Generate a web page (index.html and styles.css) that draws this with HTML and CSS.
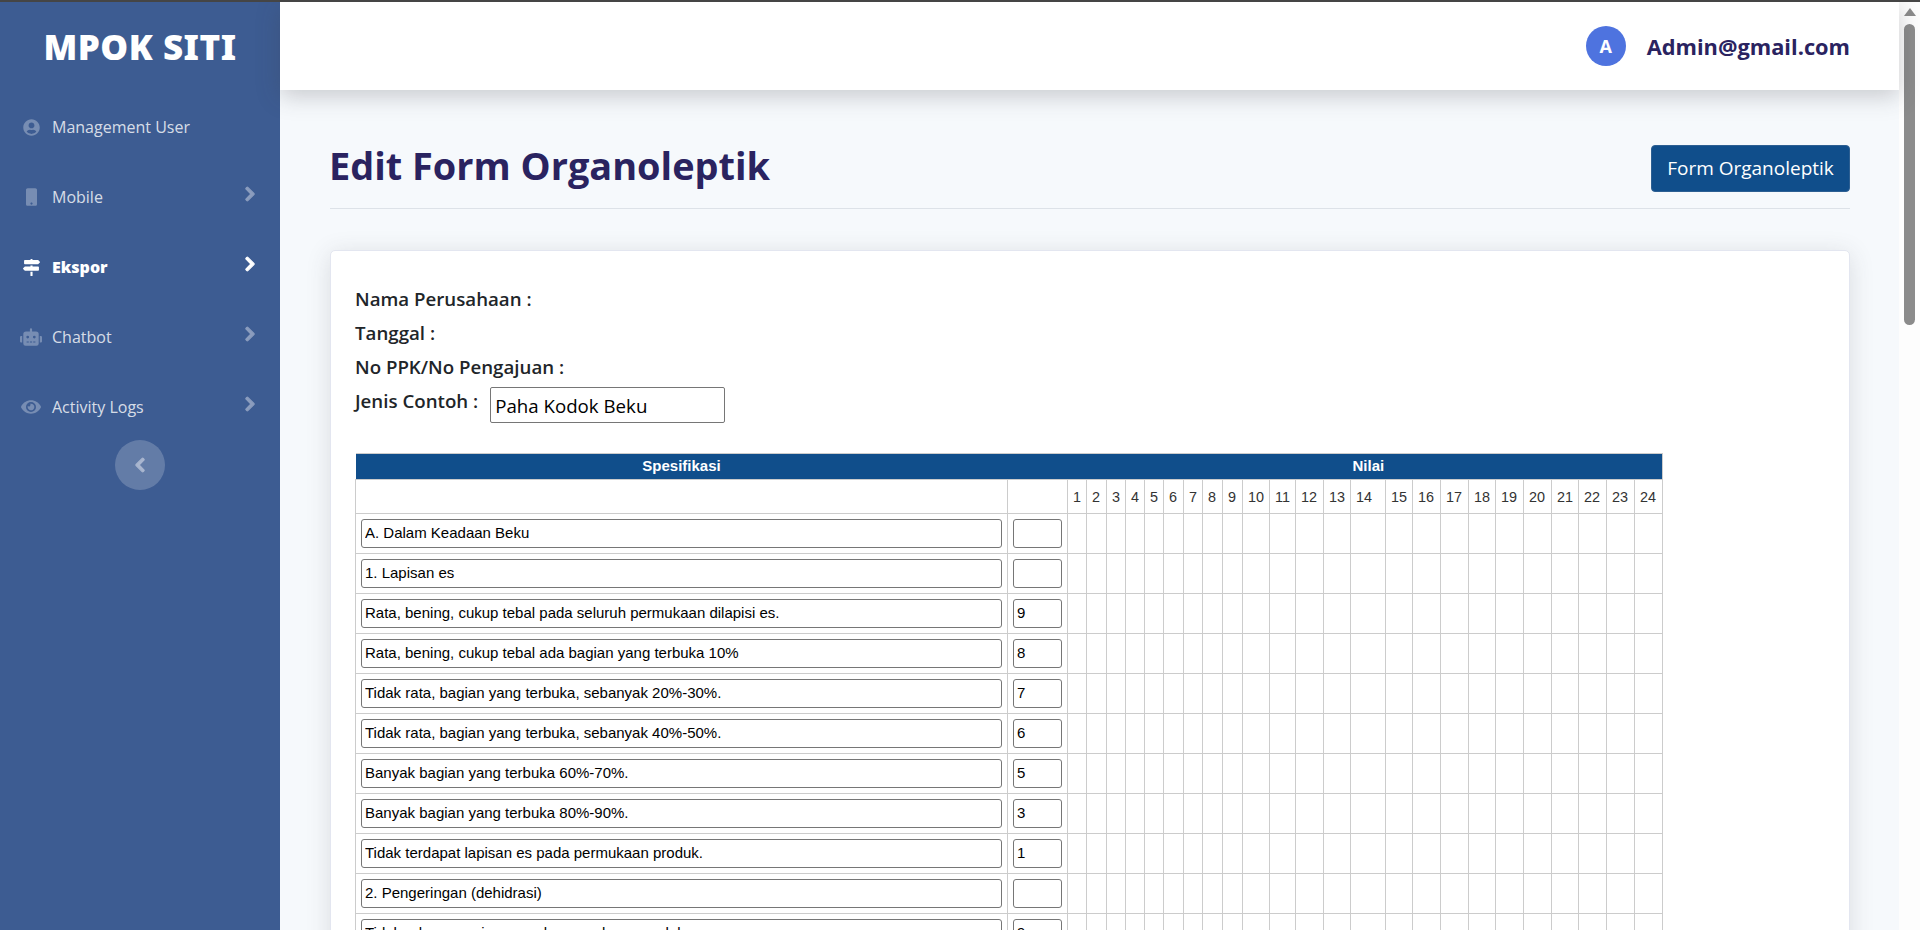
FILE: index.html
```html
<!DOCTYPE html>
<html lang="en">

<head>
    <meta charset="UTF-8">
    <meta name="viewport" content="width=device-width, initial-scale=1.0">
    <title>Edit Form Organoleptik</title>
    <link rel="stylesheet" href="styles.css">
</head>

<body>
    <aside class="sidebar">
        <div class="brand">MPOK SITI</div>
        <nav class="side-menu">
            <a class="side-item" href="#">
                <span class="side-icon"><svg class="ic-user" viewBox="0 0 496 512"><path d="M248 8C111 8 0 119 0 256s111 248 248 248 248-111 248-248S385 8 248 8zm0 96c48.6 0 88 39.4 88 88s-39.4 88-88 88-88-39.4-88-88 39.4-88 88-88zm0 344c-58.7 0-111.3-26.6-146.5-68.2 18.8-35.4 55.6-59.8 98.5-59.8 2.4 0 4.8.4 7.1 1.1 13 4.2 26.6 6.9 40.9 6.9 14.3 0 28-2.7 40.9-6.9 2.3-.7 4.7-1.1 7.1-1.1 42.9 0 79.7 24.4 98.5 59.8C359.3 421.4 306.7 448 248 448z"/></svg></span>
                <span>Management User</span>
            </a>
            <a class="side-item" href="#">
                <span class="side-icon"><svg class="ic-mobile" viewBox="0 0 320 512"><path d="M272 0H48C21.5 0 0 21.5 0 48v416c0 26.5 21.5 48 48 48h224c26.5 0 48-21.5 48-48V48c0-26.5-21.5-48-48-48zM160 480c-17.7 0-32-14.3-32-32s14.3-32 32-32 32 14.3 32 32-14.3 32-32 32z"/></svg></span>
                <span>Mobile</span>
                <svg class="chevron" viewBox="0 0 320 512"><path d="M285.476 272.971L91.132 467.314c-9.373 9.373-24.569 9.373-33.941 0l-22.667-22.667c-9.357-9.357-9.375-24.522-.04-33.901L188.505 256 34.484 101.255c-9.335-9.379-9.317-24.544.04-33.901l22.667-22.667c9.373-9.373 24.569-9.373 33.941 0L285.475 239.03c9.373 9.372 9.373 24.568.001 33.941z"/></svg>
            </a>
            <a class="side-item active" href="#">
                <span class="side-icon"><svg class="ic-signs" viewBox="0 0 512 512"><path d="M507.31 84.69L464 41.37c-6-6-14.14-9.37-22.63-9.37H288V16c0-8.84-7.16-16-16-16h-32c-8.84 0-16 7.16-16 16v16H56c-13.25 0-24 10.75-24 24v80c0 13.25 10.75 24 24 24h385.37c8.49 0 16.62-3.37 22.63-9.37l43.31-43.31c6.25-6.26 6.25-16.38 0-22.63zM224 496c0 8.84 7.16 16 16 16h32c8.84 0 16-7.16 16-16V384h-64v112zm232-272H288v-32h-64v32H70.63c-8.49 0-16.62 3.37-22.63 9.37L4.69 276.69c-6.25 6.25-6.25 16.38 0 22.63L48 342.63c6 6 14.14 9.37 22.63 9.37H456c13.25 0 24-10.75 24-24v-80c0-13.25-10.75-24-24-24z"/></svg></span>
                <span>Ekspor</span>
                <svg class="chevron" viewBox="0 0 320 512"><path d="M285.476 272.971L91.132 467.314c-9.373 9.373-24.569 9.373-33.941 0l-22.667-22.667c-9.357-9.357-9.375-24.522-.04-33.901L188.505 256 34.484 101.255c-9.335-9.379-9.317-24.544.04-33.901l22.667-22.667c9.373-9.373 24.569-9.373 33.941 0L285.475 239.03c9.373 9.372 9.373 24.568.001 33.941z"/></svg>
            </a>
            <a class="side-item" href="#">
                <span class="side-icon"><svg class="ic-robot" viewBox="0 0 640 512"><path d="M32,224H64V416H32A31.96166,31.96166,0,0,1,0,384V256A31.96166,31.96166,0,0,1,32,224Zm512-48V448a64.06328,64.06328,0,0,1-64,64H160a64.06328,64.06328,0,0,1-64-64V176a79.974,79.974,0,0,1,80-80H288V32a32,32,0,0,1,64,0V96H464A79.974,79.974,0,0,1,544,176ZM264,256a40,40,0,1,0-40,40A39.997,39.997,0,0,0,264,256Zm-8,128H192v32h64Zm96,0H288v32h64ZM456,256a40,40,0,1,0-40,40A39.997,39.997,0,0,0,456,256Zm-8,128H384v32h64ZM640,256V384a31.96166,31.96166,0,0,1-32,32H576V224h32A31.96166,31.96166,0,0,1,640,256Z"/></svg></span>
                <span>Chatbot</span>
                <svg class="chevron" viewBox="0 0 320 512"><path d="M285.476 272.971L91.132 467.314c-9.373 9.373-24.569 9.373-33.941 0l-22.667-22.667c-9.357-9.357-9.375-24.522-.04-33.901L188.505 256 34.484 101.255c-9.335-9.379-9.317-24.544.04-33.901l22.667-22.667c9.373-9.373 24.569-9.373 33.941 0L285.475 239.03c9.373 9.372 9.373 24.568.001 33.941z"/></svg>
            </a>
            <a class="side-item" href="#">
                <span class="side-icon"><svg class="ic-eye" viewBox="0 0 576 512"><path d="M572.52 241.4C518.29 135.59 410.93 64 288 64S57.68 135.64 3.48 241.41a32.35 32.35 0 0 0 0 29.19C57.71 376.41 165.07 448 288 448s230.32-71.64 284.52-177.41a32.35 32.35 0 0 0 0-29.19zM288 400a144 144 0 1 1 144-144 143.93 143.93 0 0 1-144 144zm0-240a95.31 95.31 0 0 0-25.31 3.79 47.85 47.85 0 0 1-66.9 66.9A95.78 95.78 0 1 0 288 160z"/></svg></span>
                <span>Activity Logs</span>
                <svg class="chevron" viewBox="0 0 320 512"><path d="M285.476 272.971L91.132 467.314c-9.373 9.373-24.569 9.373-33.941 0l-22.667-22.667c-9.357-9.357-9.375-24.522-.04-33.901L188.505 256 34.484 101.255c-9.335-9.379-9.317-24.544.04-33.901l22.667-22.667c9.373-9.373 24.569-9.373 33.941 0L285.475 239.03c9.373 9.372 9.373 24.568.001 33.941z"/></svg>
            </a>
        </nav>
        <button class="side-toggle" type="button">
            <svg viewBox="0 0 320 512"><path d="M34.52 239.03L228.87 44.69c9.37-9.37 24.57-9.37 33.94 0l22.67 22.67c9.36 9.36 9.37 24.52.04 33.9L131.49 256l154.02 154.75c9.34 9.38 9.32 24.54-.04 33.9l-22.67 22.67c-9.37 9.37-24.57 9.37-33.94 0L34.52 272.97c-9.37-9.37-9.37-24.57 0-33.94z"/></svg>
        </button>
    </aside>

    <div class="main">
        <header class="topbar">
            <span class="avatar">A</span>
            <span class="user-name">Admin@gmail.com</span>
        </header>

        <div class="content">
            <div class="page-head">
                <h1>Edit Form Organoleptik</h1>
                <a class="btn-form" href="#">Form Organoleptik</a>
            </div>

            <div class="card">
                <p class="field">Nama Perusahaan :</p>
                <p class="field">Tanggal :</p>
                <p class="field">No PPK/No Pengajuan :</p>
                <div class="field-row">
                    <label for="jenis">Jenis Contoh :</label>
                    <input class="jenis-input" type="text" id="jenis" value="Paha Kodok Beku">
                </div>

                <table class="form-table">
                    <colgroup>
                        <col class="w652"><col class="w60">
                        <col class="w19"><col class="w20"><col class="w19"><col class="w19"><col class="w19"><col class="w20"><col class="w19"><col class="w20"><col class="w20">
                        <col class="w27"><col class="w26"><col class="w28"><col class="w27"><col class="w35"><col class="w27"><col class="w28"><col class="w28"><col class="w27"><col class="w28"><col class="w28"><col class="w27"><col class="w28"><col class="w28"><col class="w28">
                    </colgroup>
                    <thead>
                        <tr class="head-main">
                            <th>Spesifikasi</th>
                            <th></th>
                            <th colspan="24" class="head-nilai">Nilai</th>
                        </tr>
                        <tr class="head-nums">
                            <th></th><th></th>
                            <th>1</th><th>2</th><th>3</th><th>4</th><th>5</th><th>6</th><th>7</th><th>8</th><th>9</th><th>10</th><th>11</th><th>12</th><th>13</th><th>14</th><th>15</th><th>16</th><th>17</th><th>18</th><th>19</th><th>20</th><th>21</th><th>22</th><th>23</th><th>24</th>
                        </tr>
                    </thead>
                    <tbody>
                        <tr>
                            <td><input type="text" value="A. Dalam Keadaan Beku"></td>
                            <td><input type="text" value=""></td>
                            <td></td><td></td><td></td><td></td><td></td><td></td><td></td><td></td><td></td><td></td><td></td><td></td><td></td><td></td><td></td><td></td><td></td><td></td><td></td><td></td><td></td><td></td><td></td><td></td>
                        </tr>
                        <tr>
                            <td><input type="text" value="1. Lapisan es"></td>
                            <td><input type="text" value=""></td>
                            <td></td><td></td><td></td><td></td><td></td><td></td><td></td><td></td><td></td><td></td><td></td><td></td><td></td><td></td><td></td><td></td><td></td><td></td><td></td><td></td><td></td><td></td><td></td><td></td>
                        </tr>
                        <tr>
                            <td><input type="text" value="Rata, bening, cukup tebal pada seluruh permukaan dilapisi es."></td>
                            <td><input type="text" value="9"></td>
                            <td></td><td></td><td></td><td></td><td></td><td></td><td></td><td></td><td></td><td></td><td></td><td></td><td></td><td></td><td></td><td></td><td></td><td></td><td></td><td></td><td></td><td></td><td></td><td></td>
                        </tr>
                        <tr>
                            <td><input type="text" value="Rata, bening, cukup tebal ada bagian yang terbuka 10%"></td>
                            <td><input type="text" value="8"></td>
                            <td></td><td></td><td></td><td></td><td></td><td></td><td></td><td></td><td></td><td></td><td></td><td></td><td></td><td></td><td></td><td></td><td></td><td></td><td></td><td></td><td></td><td></td><td></td><td></td>
                        </tr>
                        <tr>
                            <td><input type="text" value="Tidak rata, bagian yang terbuka, sebanyak 20%-30%."></td>
                            <td><input type="text" value="7"></td>
                            <td></td><td></td><td></td><td></td><td></td><td></td><td></td><td></td><td></td><td></td><td></td><td></td><td></td><td></td><td></td><td></td><td></td><td></td><td></td><td></td><td></td><td></td><td></td><td></td>
                        </tr>
                        <tr>
                            <td><input type="text" value="Tidak rata, bagian yang terbuka, sebanyak 40%-50%."></td>
                            <td><input type="text" value="6"></td>
                            <td></td><td></td><td></td><td></td><td></td><td></td><td></td><td></td><td></td><td></td><td></td><td></td><td></td><td></td><td></td><td></td><td></td><td></td><td></td><td></td><td></td><td></td><td></td><td></td>
                        </tr>
                        <tr>
                            <td><input type="text" value="Banyak bagian yang terbuka 60%-70%."></td>
                            <td><input type="text" value="5"></td>
                            <td></td><td></td><td></td><td></td><td></td><td></td><td></td><td></td><td></td><td></td><td></td><td></td><td></td><td></td><td></td><td></td><td></td><td></td><td></td><td></td><td></td><td></td><td></td><td></td>
                        </tr>
                        <tr>
                            <td><input type="text" value="Banyak bagian yang terbuka 80%-90%."></td>
                            <td><input type="text" value="3"></td>
                            <td></td><td></td><td></td><td></td><td></td><td></td><td></td><td></td><td></td><td></td><td></td><td></td><td></td><td></td><td></td><td></td><td></td><td></td><td></td><td></td><td></td><td></td><td></td><td></td>
                        </tr>
                        <tr>
                            <td><input type="text" value="Tidak terdapat lapisan es pada permukaan produk."></td>
                            <td><input type="text" value="1"></td>
                            <td></td><td></td><td></td><td></td><td></td><td></td><td></td><td></td><td></td><td></td><td></td><td></td><td></td><td></td><td></td><td></td><td></td><td></td><td></td><td></td><td></td><td></td><td></td><td></td>
                        </tr>
                        <tr>
                            <td><input type="text" value="2. Pengeringan (dehidrasi)"></td>
                            <td><input type="text" value=""></td>
                            <td></td><td></td><td></td><td></td><td></td><td></td><td></td><td></td><td></td><td></td><td></td><td></td><td></td><td></td><td></td><td></td><td></td><td></td><td></td><td></td><td></td><td></td><td></td><td></td>
                        </tr>
                        <tr>
                            <td><input type="text" value="Tidak ada pengeringan pada permukaan produk."></td>
                            <td><input type="text" value="9"></td>
                            <td></td><td></td><td></td><td></td><td></td><td></td><td></td><td></td><td></td><td></td><td></td><td></td><td></td><td></td><td></td><td></td><td></td><td></td><td></td><td></td><td></td><td></td><td></td><td></td>
                        </tr>
                    </tbody>
                </table>
            </div>
        </div>
    </div>

    <div class="scroll-track">
        <span class="scroll-arrow"></span>
        <span class="scroll-thumb"></span>
    </div>
</body>

</html>
```
FILE: styles.css
```css
html,
body {
    height: 100%;
    overflow: hidden;
}

body {
    margin: 0;
    display: flex;
    box-sizing: border-box;
    border-top: 2px solid #454545;
    background-color: #f6f9fc;
    font-family: "Open Sans", "Noto Sans", sans-serif;
    color: #212529;
}

/* sidebar */
.sidebar {
    flex: 0 0 280px;
    background-color: #3d5c92;
    display: flex;
    flex-direction: column;
}

.brand {
    height: 92px;
    box-sizing: border-box;
    padding-top: 20px;
    text-align: center;
    font-family: "Noto Sans", "Open Sans", sans-serif;
    font-size: 35px;
    line-height: 50px;
    font-weight: 900;
    letter-spacing: 0.5px;
    color: #fff;
}

.side-menu {
    display: flex;
    flex-direction: column;
    gap: 4px;
}

.side-item {
    height: 66px;
    display: flex;
    align-items: center;
    padding: 0 25px 0 15px;
    font-size: 16px;
    color: rgba(255, 255, 255, 0.8);
    text-decoration: none;
}

.side-item.active {
    color: #fff;
    font-weight: 800;
}

.side-icon {
    flex: 0 0 32px;
    margin-right: 5px;
    display: flex;
    justify-content: center;
    fill: rgba(255, 255, 255, 0.3);
}

.side-item.active .side-icon {
    fill: #fff;
}

.ic-user {
    width: 17px;
    height: 17px;
}

.ic-mobile {
    width: 11px;
    height: 18px;
}

.ic-signs {
    width: 17px;
    height: 17px;
}

.ic-robot {
    width: 22px;
    height: 18px;
}

.ic-eye {
    width: 20px;
    height: 18px;
}

.chevron {
    width: 10px;
    height: 16px;
    margin-left: auto;
    margin-bottom: 6px;
    fill: #8b9dbe;
    stroke: #8b9dbe;
    stroke-width: 36;
}

.side-item.active .chevron {
    fill: #fff;
    stroke: #fff;
}

.side-toggle {
    width: 50px;
    height: 50px;
    margin: 0 auto;
    padding: 0;
    border: none;
    border-radius: 50%;
    background-color: rgba(255, 255, 255, 0.2);
    display: flex;
    align-items: center;
    justify-content: center;
}

.side-toggle svg {
    width: 10px;
    height: 16px;
    fill: #a9b6cf;
    stroke: #a9b6cf;
    stroke-width: 36;
}

/* main area */
.main {
    flex: 1;
    min-width: 0;
    display: flex;
    flex-direction: column;
}

.topbar {
    flex: 0 0 88px;
    background-color: #fff;
    box-shadow: 0 6px 22px rgba(58, 59, 69, 0.25);
    display: flex;
    align-items: center;
    justify-content: flex-end;
    gap: 21px;
    padding-right: 49px;
    position: relative;
}

.avatar {
    width: 40px;
    height: 40px;
    border-radius: 50%;
    background-color: #4e73df;
    color: #fff;
    font-weight: 700;
    font-size: 18px;
    display: flex;
    align-items: center;
    justify-content: center;
}

.user-name {
    font-size: 21.8px;
    font-weight: 700;
    color: #2a2360;
}

.content {
    padding: 55px 49px 0 50px;
}

.page-head {
    display: flex;
    align-items: center;
    justify-content: space-between;
    height: 64px;
    box-sizing: border-box;
    padding-bottom: 16px;
    border-bottom: 1px solid #dde2e8;
}

h1 {
    margin: 0 0 6px -1px;
    font-size: 37.9px;
    line-height: 47px;
    font-weight: 700;
    color: #2a2360;
}

.btn-form {
    width: 199px;
    height: 47px;
    box-sizing: border-box;
    background-color: #104e8b;
    border: 1px solid #2d5f92;
    border-radius: 4px;
    color: #fff;
    font-size: 19px;
    line-height: 45px;
    text-align: center;
    text-decoration: none;
}

.card {
    margin-top: 41px;
    padding: 31px 24px 40px;
    background-color: #fff;
    border: 1px solid #e3e6f0;
    border-radius: 5px;
    box-shadow: 0 4px 24px rgba(58, 59, 69, 0.15);
}

.field {
    margin: 0;
    font-size: 18.7px;
    line-height: 34px;
    font-weight: 600;
}

.field-row {
    display: flex;
    align-items: flex-start;
    gap: 12px;
    margin: 3px 0 30px;
    height: 36px;
}

.field-row label {
    font-size: 18.7px;
    line-height: 28px;
    font-weight: 600;
}

.jenis-input {
    width: 235px;
    height: 36px;
    box-sizing: border-box;
    padding: 0 4px;
    font-family: "Open Sans", "Noto Sans", sans-serif;
    font-size: 18.7px;
    border: 1px solid #767676;
    border-radius: 2px;
    color: #000;
}

/* form table */
.form-table {
    table-layout: fixed;
    width: 1307px;
    border-collapse: collapse;
    font-family: "Liberation Sans", Arial, sans-serif;
    font-size: 14.4px;
}

.form-table th,
.form-table td {
    border: 1px solid #ccc;
    padding: 5px;
}

.form-table th {
    overflow: hidden;
    font-weight: 400;
    color: #333;
    text-align: left;
}

.head-main th {
    height: 23px;
    padding: 0 0 2px;
    border-left: none;
    border-right: none;
    background-color: #104e8b;
    color: #fff;
    font-size: 15px;
    font-weight: 700;
    text-align: center;
}

.head-main .head-nilai {
    padding-left: 7px;
    border-right: 1px solid #ccc;
}

.head-nums th {
    height: 23px;
}

.form-table td input {
    display: block;
    width: 100%;
    height: 29px;
    box-sizing: border-box;
    padding: 0 3px 2px;
    border: 1px solid #767676;
    border-radius: 3px;
    font-family: "Liberation Sans", Arial, sans-serif;
    font-size: 15px;
    color: #000;
}

.w652 { width: 652px; }
.w60 { width: 60px; }
.w19 { width: 19px; }
.w20 { width: 20px; }
.w26 { width: 26px; }
.w27 { width: 27px; }
.w28 { width: 28px; }
.w35 { width: 35px; }

/* window scrollbar */
.scroll-track {
    flex: 0 0 21px;
    background-color: #fdfdfd;
    display: flex;
    flex-direction: column;
    align-items: center;
}

.scroll-arrow {
    width: 0;
    height: 0;
    margin-top: 6px;
    border-left: 6px solid transparent;
    border-right: 6px solid transparent;
    border-bottom: 8px solid #8b8b8b;
}

.scroll-thumb {
    width: 11px;
    height: 301px;
    margin-top: 8px;
    border-radius: 6px;
    background-color: #8b8b8b;
}
```
